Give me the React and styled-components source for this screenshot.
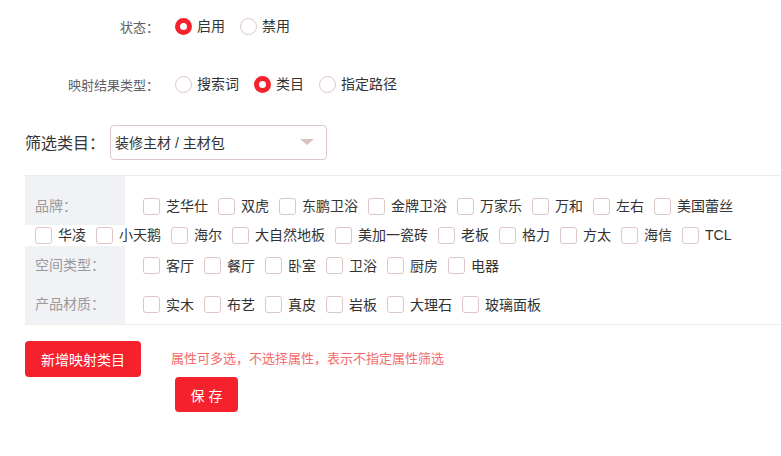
import React from 'react'
import styled, { createGlobalStyle } from 'styled-components'

const GlobalStyle = createGlobalStyle`
  body {
    margin: 0;
    background: #fff;
    font-family: "Liberation Sans", "Noto Sans CJK SC", sans-serif;
    color: #333;
  }
`

const RED = '#f5222e'

const Page = styled.div`
  padding-top: 6px;
  width: 781px;
`

const FormRow = styled.div`
  display: flex;
  align-items: center;
  height: 40px;
  margin-bottom: ${p => p.$gap ?? 18}px;
`

const FormLabel = styled.div`
  width: 159px;
  text-align: right;
  font-size: 13px;
  color: #5e6066;
  margin-right: 16px;
  flex: none;
`

const RadioOption = styled.label`
  display: inline-flex;
  align-items: center;
  margin-right: 15px;
  font-size: 14px;
  line-height: 20px;
  color: #333;
  cursor: pointer;
`

const RadioDot = styled.span`
  width: 17px;
  height: 17px;
  box-sizing: border-box;
  border-radius: 50%;
  margin-right: 5px;
  border: ${p => (p.$on ? `5px solid ${RED}` : '1px solid #dcc6c6')};
  background: #fff;
`

const FilterLabel = styled.div`
  padding-left: 25px;
  font-size: 16px;
  color: #333;
  margin-right: 5px;
`

const Select = styled.div`
  width: 217px;
  height: 35px;
  box-sizing: border-box;
  border: 1px solid #dcc6c6;
  border-radius: 4px;
  display: flex;
  align-items: center;
  justify-content: space-between;
  padding: 0 12px 0 4px;
  font-size: 14px;
  color: #333;
`

const Caret = styled.span`
  width: 0;
  height: 0;
  border-left: 7px solid transparent;
  border-right: 7px solid transparent;
  border-top: 6px solid #d8c2c2;
`

const Table = styled.div`
  margin: 13px 0 0 25px;
  border-top: 1px solid #f1eaea;
  border-bottom: 1px solid #f6e9e9;
`

const AttrRow = styled.div`
  display: flex;
  flex-wrap: wrap;
  align-items: ${p => (p.$wrap ? 'flex-end' : 'center')};
  row-gap: 9px;
  padding-bottom: ${p => (p.$wrap ? 1 : 0)}px;
`

const AttrLabel = styled.div`
  flex: none;
  width: 100px;
  box-sizing: border-box;
  padding-left: 10px;
  margin-right: 8px;
  background: #f1f2f6;
  font-size: 14px;
  color: #9a9a9a;
  align-self: flex-start;
  ${p =>
    p.$wrap
      ? `height: 49px; padding-top: 20px; line-height: 20px; margin-bottom: -9px;`
      : `height: 39px; line-height: 39px;`}
`

const Check = styled.label`
  display: inline-flex;
  align-items: center;
  height: 20px;
  margin-left: 10px;
  font-size: 14px;
  line-height: 20px;
  color: #333;
  white-space: nowrap;
`

const Box = styled.span`
  width: 17px;
  height: 17px;
  box-sizing: border-box;
  border: 1px solid #dcc6c6;
  border-radius: 3px;
  margin-right: 6px;
  background: #fff;
`

const Footer = styled.div`
  display: flex;
  align-items: flex-start;
  margin-top: 16px;
  padding-left: 25px;
`

const Button = styled.button`
  border: none;
  border-radius: 4px;
  background: ${RED};
  color: #fff;
  font-family: inherit;
  font-size: 14px;
  padding: 0;
  width: ${p => p.$w}px;
  height: ${p => p.$h}px;
  cursor: pointer;
`

const Side = styled.div`
  margin-left: 30px;
  display: flex;
  flex-direction: column;
  align-items: flex-start;
`

const Hint = styled.div`
  margin-top: 8px;
  font-size: 13px;
  line-height: 20px;
  color: #f56c6c;
`

const SaveWrap = styled.div`
  margin: 8px 0 0 4px;
`

const brands = ['芝华仕', '双虎', '东鹏卫浴', '金牌卫浴', '万家乐', '万和', '左右', '美国蕾丝', '华凌', '小天鹅', '海尔', '大自然地板', '美加一瓷砖', '老板', '格力', '方太', '海信', 'TCL']
const spaces = ['客厅', '餐厅', '卧室', '卫浴', '厨房', '电器']
const materials = ['实木', '布艺', '真皮', '岩板', '大理石', '玻璃面板']

const Radios = ({ options, value }) => (
  <>
    {options.map(o => (
      <RadioOption key={o}>
        <RadioDot $on={o === value} />
        {o}
      </RadioOption>
    ))}
  </>
)

const Attr = ({ label, items, wrap }) => (
  <AttrRow $wrap={wrap}>
    <AttrLabel $wrap={wrap}>{label}</AttrLabel>
    {items.map(i => (
      <Check key={i}>
        <Box />
        {i}
      </Check>
    ))}
  </AttrRow>
)

export default function App() {
  return (
    <Page>
      <GlobalStyle />
      <FormRow>
        <FormLabel>状态：</FormLabel>
        <Radios options={['启用', '禁用']} value="启用" />
      </FormRow>
      <FormRow>
        <FormLabel>映射结果类型：</FormLabel>
        <Radios options={['搜索词', '类目', '指定路径']} value="类目" />
      </FormRow>
      <FormRow $gap={0}>
        <FilterLabel>筛选类目：</FilterLabel>
        <Select>
          <span>装修主材 / 主材包</span>
          <Caret />
        </Select>
      </FormRow>
      <Table>
        <Attr label="品牌：" items={brands} wrap />
        <Attr label="空间类型：" items={spaces} />
        <Attr label="产品材质：" items={materials} />
      </Table>
      <Footer>
        <Button $w={116} $h={36}>新增映射类目</Button>
        <Side>
          <Hint>属性可多选，不选择属性，表示不指定属性筛选</Hint>
          <SaveWrap>
            <Button $w={63} $h={35}>保 存</Button>
          </SaveWrap>
        </Side>
      </Footer>
    </Page>
  )
}
